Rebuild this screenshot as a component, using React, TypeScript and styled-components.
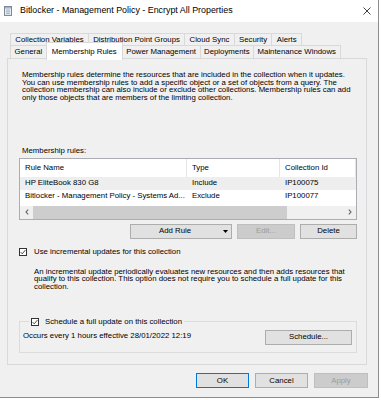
import React from "react";
import styled, { createGlobalStyle } from "styled-components";

const GlobalStyle = createGlobalStyle`
  html, body { margin: 0; padding: 0; background: #ffffff; }
  body {
    font-family: "Liberation Sans", Arial, sans-serif;
    font-size: 7.8px;
    line-height: 7.8px;
    color: #000000;
  }
  #root { width: 381px; height: 400px; }
`;

const Window = styled.div`
  width: 378px;
  height: 397px;
  border-right: 1px solid #8c8c8c;
  border-bottom: 1px solid #8c8c8c;
  display: flex;
  flex-direction: column;
  background: #f0f0f0;
`;

const TitleBar = styled.div`
  height: 22px;
  background: #ffffff;
  display: flex;
  align-items: center;
  padding: 0 7px 0 4px;
  flex-shrink: 0;
`;

const TitleText = styled.span`
  margin-left: 8px;
  font-size: 8.9px;
  white-space: nowrap;
`;

const CloseButton = styled.span`
  margin-left: auto;
  display: flex;
`;

const Body = styled.div`
  flex: 1;
  display: flex;
  flex-direction: column;
  padding: 11px 10px 9px 7px;
  min-height: 0;
`;

const TabRow = styled.div<{ $h: number }>`
  display: flex;
  height: ${(p) => p.$h}px;
  padding-left: 3px;
  position: relative;
  z-index: 1;
`;

const Tab = styled.div<{ $active?: boolean; $pad: number }>`
  display: flex;
  align-items: center;
  white-space: nowrap;
  box-sizing: border-box;
  border: 1px solid #d9d9d9;
  border-bottom: none;
  margin-right: -1px;
  background: ${(p) => (p.$active ? "#ffffff" : "#f0f0f0")};
  padding: 0 ${(p) => p.$pad}px;
  height: ${(p) => (p.$active ? "calc(100% + 5px)" : "100%")};
  margin-top: ${(p) => (p.$active ? -3 : 0)}px;
  position: relative;
  z-index: ${(p) => (p.$active ? 2 : 0)};
`;

const Panel = styled.div`
  flex: 1;
  margin-right: 1px;
  border: 1px solid #d9d9d9;
  background: #f0f0f0;
  display: flex;
  flex-direction: column;
  padding: 0 9px 0 11px;
  min-height: 0;
`;

const Lines = styled.div<{ $top: number; $left: number }>`
  margin-top: ${(p) => p.$top}px;
  margin-left: ${(p) => p.$left}px;
  white-space: nowrap;
  line-height: 7.7px;
`;

const Label = styled.div<{ $top: number }>`
  margin-top: ${(p) => p.$top}px;
  margin-left: 3px;
`;

const ListBox = styled.div`
  margin-top: 3px;
  height: 62px;
  box-sizing: border-box;
  border: 1px solid #abadb3;
  background: #ffffff;
  display: flex;
  flex-direction: column;
`;

const ListRow = styled.div<{ $h: number; $shade?: boolean }>`
  display: grid;
  grid-template-columns: 167px 93px 1fr;
  height: ${(p) => p.$h}px;
  align-items: center;
  background: ${(p) => (p.$shade ? "#eeeeee" : "transparent")};
  flex-shrink: 0;
`;

const HeaderCell = styled.div`
  height: 100%;
  display: flex;
  align-items: center;
  padding-left: 5px;
  border-right: 1px solid #e5e5e5;
  white-space: nowrap;
`;

const Cell = styled.div`
  padding-left: 5px;
  white-space: nowrap;
  overflow: hidden;
`;

const Spacer = styled.div`
  flex: 1;
`;

const HScroll = styled.div`
  height: 13px;
  background: #f0f0f0;
  display: flex;
  flex-shrink: 0;
`;

const ScrollArrow = styled.div`
  width: 13px;
  display: flex;
  align-items: center;
  justify-content: center;
`;

const ScrollThumb = styled.div`
  width: 254px;
  background: #cdcdcd;
`;

const ButtonRow = styled.div<{ $top: number; $gap: number }>`
  display: flex;
  justify-content: flex-end;
  gap: ${(p) => p.$gap}px;
  margin-top: ${(p) => p.$top}px;
  flex-shrink: 0;
`;

const Button = styled.div<{ $w: number; $disabled?: boolean; $default?: boolean }>`
  width: ${(p) => p.$w}px;
  height: 15px;
  box-sizing: border-box;
  border: 1px solid
    ${(p) => (p.$default ? "#0078d7" : p.$disabled ? "#bfbfbf" : "#adadad")};
  background: ${(p) => (p.$disabled ? "#cccccc" : "#e1e1e1")};
  color: ${(p) => (p.$disabled ? "#9c9c9c" : "#000000")};
  display: flex;
  align-items: center;
  justify-content: center;
  white-space: nowrap;
`;

const SplitButton = styled(Button)`
  justify-content: flex-start;
  padding-left: 28px;
  gap: 32px;
`;

const CheckRow = styled.div<{ $top: number }>`
  display: flex;
  align-items: center;
  gap: 7px;
  margin-top: ${(p) => p.$top}px;
  height: 8px;
  white-space: nowrap;
`;

const Group = styled.fieldset`
  margin: 27px 0 0 0;
  padding: 0 4px 7px 3px;
  border: 1px solid #dcdcdc;
  min-width: 0;
`;

const Legend = styled.legend`
  margin-left: 6px;
  padding: 0 2px;
  display: flex;
  align-items: center;
  gap: 6px;
  height: 8px;
  white-space: nowrap;
`;

const ScheduleRow = styled.div`
  display: flex;
  justify-content: space-between;
  align-items: flex-start;
  margin-top: 4px;
`;

const ScheduleText = styled.span`
  margin-top: 2px;
  white-space: nowrap;
`;

const Check = () => (
  <svg width="8" height="8" viewBox="0 0 8 8">
    <rect x="0.5" y="0.5" width="7" height="7" fill="#ffffff" stroke="#333333" strokeWidth="1" />
    <polyline points="1.6,4.1 3.2,5.8 6.5,2" fill="none" stroke="#222222" strokeWidth="0.8" />
  </svg>
);

const AppIcon = () => (
  <svg width="8" height="10" viewBox="0 0 8 10">
    <rect x="0.5" y="0.5" width="7" height="9" fill="#e9eef5" stroke="#7d8a9c" strokeWidth="1" />
    <rect x="1" y="1" width="6" height="1.5" fill="#9fb3cc" />
    <line x1="2" y1="4" x2="6" y2="4" stroke="#8aa0bb" strokeWidth="0.8" />
    <line x1="2" y1="5.8" x2="6" y2="5.8" stroke="#8aa0bb" strokeWidth="0.8" />
    <line x1="2" y1="7.6" x2="6" y2="7.6" stroke="#8aa0bb" strokeWidth="0.8" />
  </svg>
);

const CloseIcon = () => (
  <svg width="8" height="8" viewBox="0 0 8 8">
    <line x1="0.5" y1="0.5" x2="7.5" y2="7.5" stroke="#111111" strokeWidth="0.8" />
    <line x1="7.5" y1="0.5" x2="0.5" y2="7.5" stroke="#111111" strokeWidth="0.8" />
  </svg>
);

const Chevron = ({ dir }: { dir: "left" | "right" }) => (
  <svg width="4" height="6" viewBox="0 0 4 6">
    <polyline
      points={dir === "left" ? "3.2,0.6 1,3 3.2,5.4" : "0.8,0.6 3,3 0.8,5.4"}
      fill="none"
      stroke="#606060"
      strokeWidth="1.1"
    />
  </svg>
);

const DropArrow = () => (
  <svg width="5" height="3" viewBox="0 0 5 3">
    <polygon points="0,0 5,0 2.5,3" fill="#000000" />
  </svg>
);

const rowOneTabs = ["Collection Variables", "Distribution Point Groups", "Cloud Sync", "Security", "Alerts"];
const rowTwoTabs = ["General", "Membership Rules", "Power Management", "Deployments", "Maintenance Windows"];

export default function App() {
  return (
    <>
      <GlobalStyle />
      <Window>
        <TitleBar>
          <AppIcon />
          <TitleText>Bitlocker - Management Policy - Encrypt All Properties</TitleText>
          <CloseButton>
            <CloseIcon />
          </CloseButton>
        </TitleBar>
        <Body>
          <TabRow $h={12}>
            {rowOneTabs.map((t) => (
              <Tab key={t} $pad={4.3}>
                {t}
              </Tab>
            ))}
          </TabRow>
          <TabRow $h={13}>
            {rowTwoTabs.map((t) => (
              <Tab key={t} $active={t === "Membership Rules"} $pad={t === "Membership Rules" ? 5 : 3.5}>
                {t}
              </Tab>
            ))}
          </TabRow>
          <Panel>
            <Lines $top={12} $left={3}>
              Membership rules determine the resources that are included in the collection when it updates.
              <br />
              You can use membership rules to add a specific object or a set of objects from a query. The
              <br />
              collection membership can also include or exclude other collections. Membership rules can add
              <br />
              only those objects that are members of the limiting collection.
            </Lines>
            <Label $top={45}>Membership rules:</Label>
            <ListBox>
              <ListRow $h={18}>
                <HeaderCell>Rule Name</HeaderCell>
                <HeaderCell>Type</HeaderCell>
                <HeaderCell>Collection Id</HeaderCell>
              </ListRow>
              <ListRow $h={13} $shade>
                <Cell>HP EliteBook 830 G8</Cell>
                <Cell>Include</Cell>
                <Cell>IP100075</Cell>
              </ListRow>
              <ListRow $h={13}>
                <Cell>Bitlocker - Management Policy - Systems Ad...</Cell>
                <Cell>Exclude</Cell>
                <Cell>IP100077</Cell>
              </ListRow>
              <Spacer />
              <HScroll>
                <ScrollArrow>
                  <Chevron dir="left" />
                </ScrollArrow>
                <ScrollThumb />
                <Spacer />
                <ScrollArrow>
                  <Chevron dir="right" />
                </ScrollArrow>
              </HScroll>
            </ListBox>
            <ButtonRow $top={4} $gap={5}>
              <SplitButton $w={102}>
                <span>Add Rule</span>
                <DropArrow />
              </SplitButton>
              <Button $w={58} $disabled>
                Edit...
              </Button>
              <Button $w={57}>Delete</Button>
            </ButtonRow>
            <CheckRow $top={9}>
              <Check />
              <span>Use incremental updates for this collection</span>
            </CheckRow>
            <Lines $top={12} $left={15}>
              An incremental update periodically evaluates new resources and then adds resources that
              <br />
              qualify to this collection. This option does not require you to schedule a full update for this
              <br />
              collection.
            </Lines>
            <Group>
              <Legend>
                <Check />
                <span>Schedule a full update on this collection</span>
              </Legend>
              <ScheduleRow>
                <ScheduleText>Occurs every 1 hours effective 28/01/2022 12:19</ScheduleText>
                <Button $w={87}>Schedule...</Button>
              </ScheduleRow>
            </Group>
          </Panel>
          <ButtonRow $top={8} $gap={6}>
            <Button $w={53} $default>
              OK
            </Button>
            <Button $w={53}>Cancel</Button>
            <Button $w={54} $disabled>
              Apply
            </Button>
          </ButtonRow>
        </Body>
      </Window>
    </>
  );
}
